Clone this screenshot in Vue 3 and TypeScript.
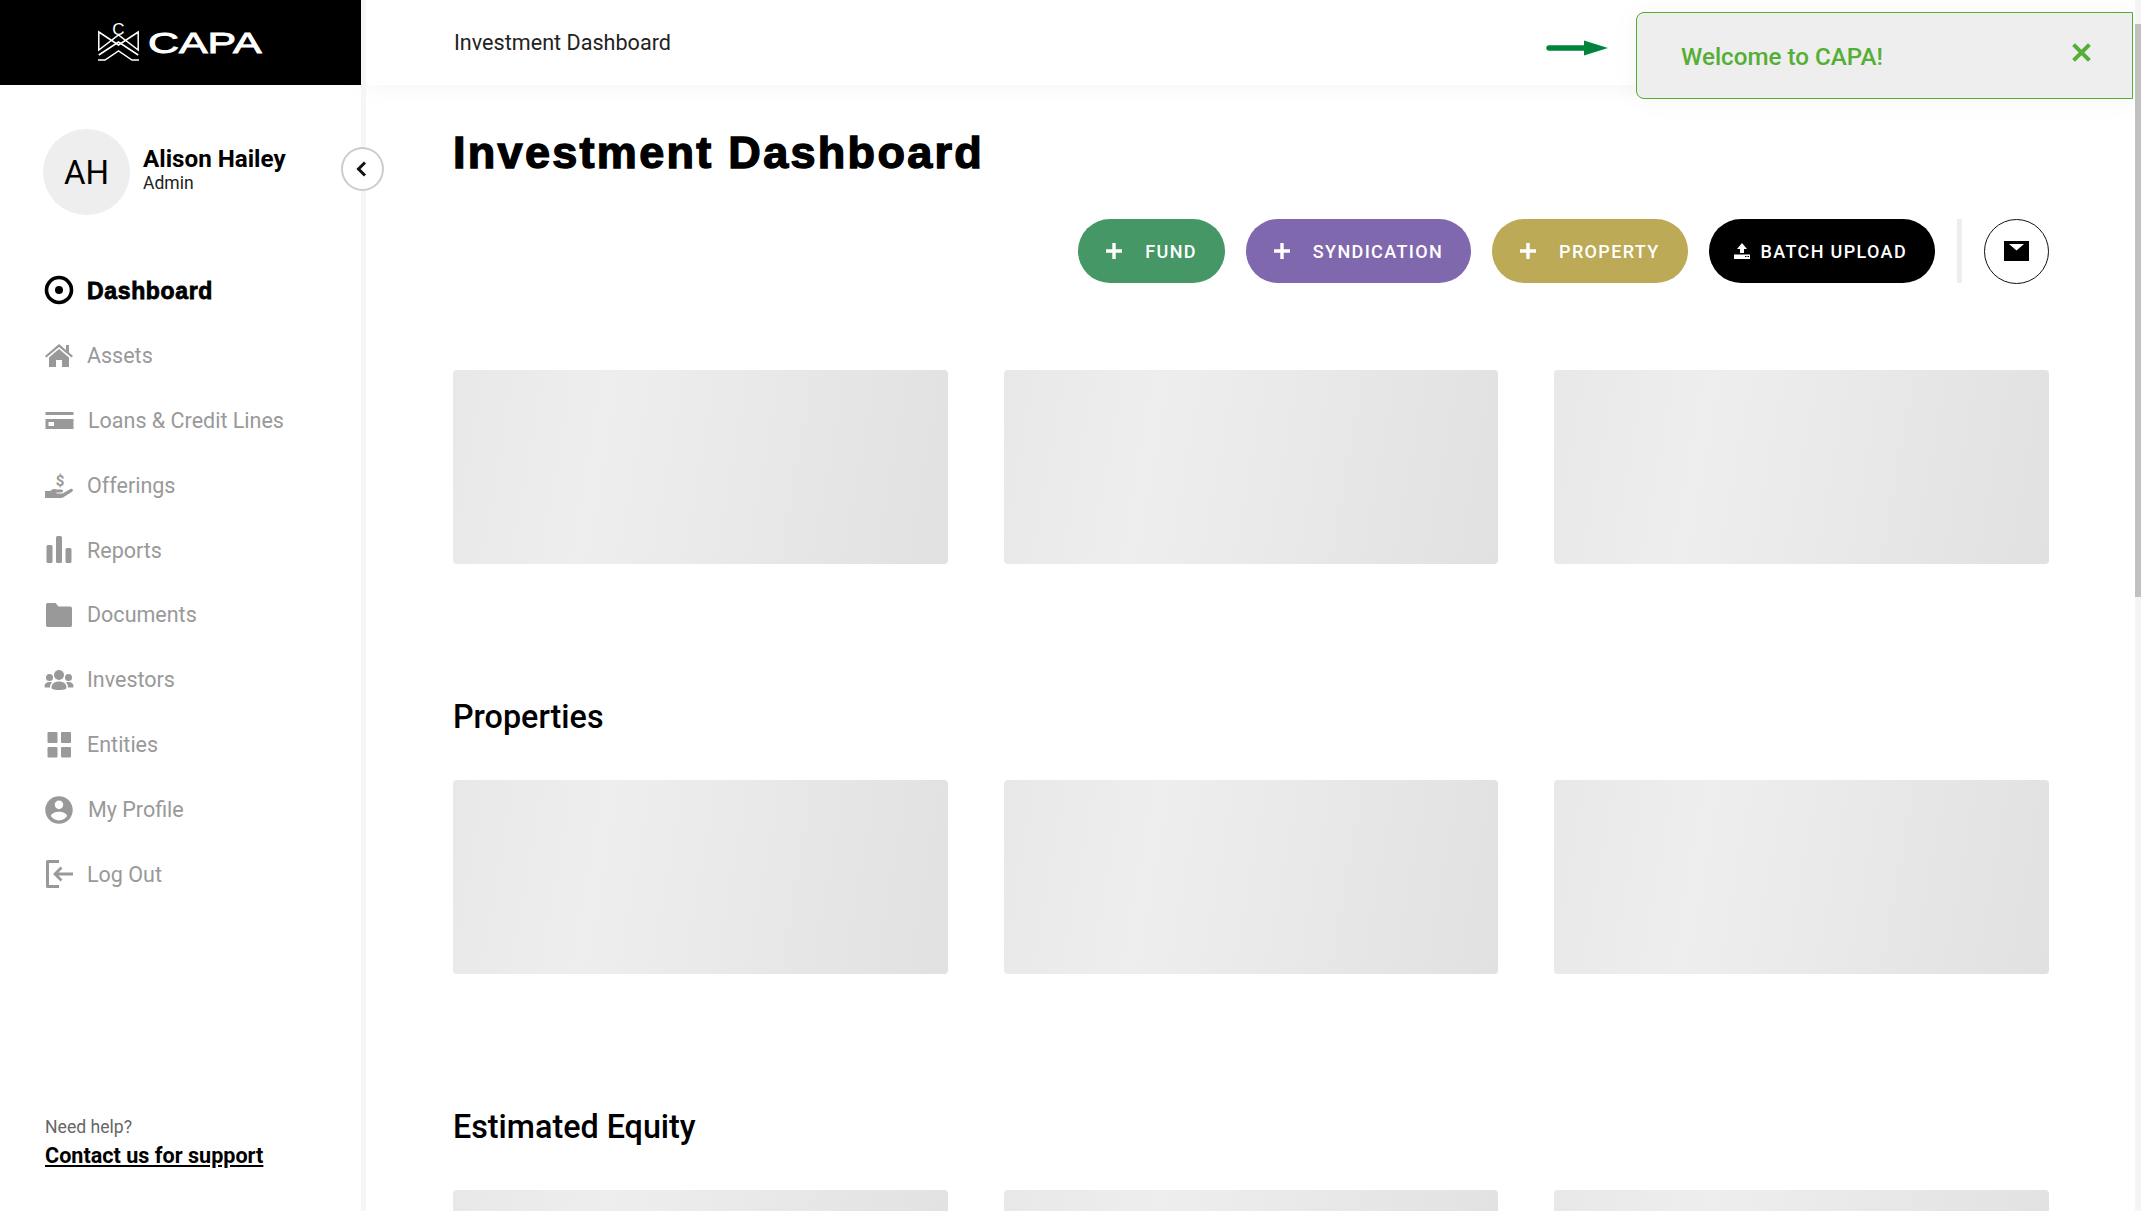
<template>
  <div class="app">
    <aside class="sidebar">
      <div class="brand">
        <svg class="brand-mark" viewBox="0 0 41 38" fill="none" stroke="#fff" stroke-width="1.5">
          <path d="M.8 9 20.5 22 40.2 9V27L20.5 12 .8 27Z" />
          <path d="M.8 32 20.5 19 40.2 32" />
          <path d="M0 37H7L20.5 28 34 37H41" />
          <text x="20.5" y="12" text-anchor="middle" class="brand-c">C</text>
        </svg>
        <span class="brand-name">CAPA</span>
      </div>

      <div class="user">
        <div class="avatar">AH</div>
        <div class="user-text">
          <div class="user-name">Alison Hailey</div>
          <div class="user-role">Admin</div>
        </div>
      </div>
      <button class="collapse" aria-label="Collapse">
        <svg viewBox="0 0 24 24" width="24" height="24" fill="none" stroke="#111" stroke-width="3">
          <path d="M14 5.500 7.500 12l6.500 6.500" />
        </svg>
      </button>

      <nav class="nav">
        <a v-for="item in navItems" :key="item.label" class="nav-item" :class="{ active: item.active }">
          <span class="nav-icon" v-html="item.icon"></span>
          <span :class="{ shifted: item.shifted }">{{ item.label }}</span>
        </a>
      </nav>

      <div class="help">
        <div class="help-q">Need help?</div>
        <a class="help-link">Contact us for support</a>
      </div>
    </aside>

    <div class="main">
      <header class="topbar">Investment Dashboard</header>

      <div class="content">
        <h1>Investment Dashboard</h1>

        <div class="actions">
          <button v-for="b in addButtons" :key="b.label" class="pill" :class="b.cls">
            <svg width="16" height="16" viewBox="0 0 16 16" stroke="#fff" stroke-width="3.4"><path d="M8 0V16M0 8H16" /></svg>
            {{ b.label }}
          </button>
          <button class="pill batch">
            <svg width="16" height="16" viewBox="0 0 16 16" fill="#fff">
              <path d="M8 0 13 6H10V10H6V6H3ZM0 11.5H16V16H0ZM11 13V14H12.5V13ZM13.5 13V14H15V13Z" fill-rule="evenodd" />
            </svg>
            BATCH UPLOAD
          </button>
          <span class="divider"></span>
          <button class="mail" aria-label="Messages">
            <svg width="25" height="20" viewBox="0 0 25 20">
              <path d="M0 0H25V20H0Z" fill="#000" />
              <path d="M5 3H20L12.5 9.500Z" fill="#fff" />
            </svg>
          </button>
        </div>

        <section v-for="(s, i) in sections" :key="i" class="block">
          <h2 v-if="s">{{ s }}</h2>
          <div class="cards">
            <div v-for="n in 3" :key="n" class="card"></div>
          </div>
        </section>
      </div>
    </div>

    <div class="hint-arrow">
      <svg width="62" height="18" viewBox="0 0 62 18" fill="#00843d">
        <path d="M3 6.300H38V1.500L62 9 38 16.500V11.700H3A2.700 2.700 0 0 1 3 6.300Z" />
      </svg>
    </div>
    <div class="toast">
      <span>Welcome to CAPA!</span>
      <svg width="19" height="19" viewBox="0 0 18 18" stroke="#55ae35" stroke-width="3.800">
        <path d="M1.500 1.500 16.500 16.500M16.500 1.500 1.500 16.500" />
      </svg>
    </div>

    <div class="scrollbar"><div class="thumb"></div></div>
  </div>
</template>

<script setup lang="ts">
const svg = (inner: string, box = '0 0 30 30') =>
  `<svg viewBox="${box}" width="30" height="30" fill="#999">${inner}</svg>`

const navItems = [
  {
    label: 'Dashboard',
    active: true,
    icon: svg('<circle cx="15" cy="15" r="12.500" fill="none" stroke="#000" stroke-width="3.600"/><circle cx="15" cy="15" r="4" fill="#000"/>'),
  },
  {
    label: 'Assets',
    icon: svg('<path d="M15 4 22 10V5H25V12.600L29 16 27.600 17.600 15 7 2.400 17.600 1 16ZM15 9 25 17.500V27H18V20H12V27H5V17.500Z"/>'),
  },
  {
    label: 'Loans & Credit Lines',
    shifted: true,
    icon: svg('<path d="M1.500 7H29.500V10H1.500ZM1.500 14H29.500V24H1.500ZM4.500 17V21H10V17Z" fill-rule="evenodd"/>'),
  },
  {
    label: 'Offerings',
    icon: svg('<path d="M1 21H6C9 18.500 11 18.500 13 19.500H17.500C19.500 19.500 19.500 22.500 17.500 22.500H12.500V23.500H18.500L26.500 19C28.500 18 30 20.500 28 21.800L19 27.500C18 28 17 28 16 28H1Z"/><text x="16" y="15.500" text-anchor="middle" font-family="Roboto" font-weight="700" font-size="15">$</text>'),
  },
  {
    label: 'Reports',
    icon: svg('<rect x="2.500" y="10" width="6" height="18" rx="1.500"/><rect x="12" y="1" width="6" height="27" rx="1.500"/><rect x="21.500" y="13" width="6" height="15" rx="1.500"/>'),
  },
  {
    label: 'Documents',
    icon: svg('<path d="M4 3H11.500L14.500 6.500H26C27.500 6.500 28 7.500 28 8.500V25C28 26.500 27 27 26 27H4C3 27 2 26.500 2 25V5C2 3.500 3 3 4 3Z"/>'),
  },
  {
    label: 'Investors',
    icon: svg('<circle cx="15" cy="10" r="5"/><circle cx="5.500" cy="12.500" r="3.500"/><circle cx="24.500" cy="12.500" r="3.500"/><path d="M7.500 22.500C7.500 18.500 11 16.500 15 16.500S22.500 18.500 22.500 22.500C22.500 24 21 25 15 25S7.500 24 7.500 22.500Z"/><path d="M.5 21.500C.5 18.500 2.500 17 5.500 17 6.500 17 7.500 17.300 8 17.500 6.500 19 6 20.500 6 22.500H2C1 22.500.5 22.300.5 21.500ZM29.500 21.500C29.500 18.500 27.500 17 24.500 17 23.500 17 22.500 17.300 22 17.500 23.500 19 24 20.500 24 22.500H28C29 22.500 29.500 22.300 29.500 21.500Z"/>'),
  },
  {
    label: 'Entities',
    icon: svg('<rect x="3.500" y="2" width="10" height="11" rx="1"/><rect x="17" y="2" width="10" height="11" rx="1"/><rect x="3.500" y="17" width="10" height="10.500" rx="1"/><rect x="17" y="17" width="10" height="10.500" rx="1"/>'),
  },
  {
    label: 'My Profile',
    shifted: true,
    icon: svg('<path d="M12 1C5.900 1 1 5.900 1 12s4.900 11 11 11 11-4.900 11-11S18.100 1 12 1zm0 3.300c1.900 0 3.400 1.500 3.400 3.400S13.900 11.100 12 11.100 8.600 9.600 8.600 7.700 10.100 4.300 12 4.300zm0 16c-2.700 0-5.100-1.400-6.500-3.500.03-2.200 4.300-3.400 6.500-3.400 2.200 0 6.500 1.200 6.500 3.400-1.400 2.100-3.800 3.500-6.500 3.500z"/>', '0 0 24 24'),
  },
  {
    label: 'Log Out',
    icon: svg('<path d="M15 2.500H3.500V27.500H15" fill="none" stroke="#999" stroke-width="3" stroke-linejoin="round"/><path d="M29 15H11M17.500 8.500 11 15 17.500 21.500" fill="none" stroke="#999" stroke-width="2.800"/>'),
  },
]

const addButtons = [
  { label: 'FUND', cls: 'fund' },
  { label: 'SYNDICATION', cls: 'syndication' },
  { label: 'PROPERTY', cls: 'property' },
]

const sections = ['', 'Properties', 'Estimated Equity']
</script>

<style>
html, body {
  margin: 0;
  height: 100%;
  overflow: hidden;
  background: #fff;
}
</style>

<style scoped>
.app {
  display: flex;
  position: relative;
  height: 1211px;
  overflow: hidden;
  font-family: Roboto, "Liberation Sans", sans-serif;
  color: #000;
}

.sidebar {
  position: relative;
  display: flex;
  flex-direction: column;
  flex: 0 0 361px;
  border-right: 5px solid #f6f6f6;
}

.brand {
  display: flex;
  align-items: center;
  height: 85px;
  padding-left: 98px;
  box-sizing: border-box;
  background: #000;
}

.brand-mark {
  width: 41px;
  height: 38px;
  margin-top: -2px;
  overflow: visible;
}

.brand-c {
  font: 400 17px "Liberation Sans", sans-serif;
  fill: #fff;
  stroke: none;
}

.brand-name {
  margin-left: 9px;
  font: 400 30px "Liberation Sans", sans-serif;
  color: #fff;
  -webkit-text-stroke: 0.9px #fff;
  transform: scaleX(1.43);
  transform-origin: left center;
}

.user {
  display: flex;
  align-items: center;
  gap: 13px;
  margin: 44px 0 0 43px;
}

.avatar {
  display: flex;
  align-items: center;
  justify-content: center;
  width: 87px;
  height: 86px;
  border-radius: 50%;
  background: #eee;
  font-size: 33px;
}

.user-text {
  margin-top: -5px;
}

.user-name {
  font-size: 24.200px;
  font-weight: 700;
  line-height: 28px;
}

.user-role {
  font-size: 17.500px;
  line-height: 21px;
  color: #222;
}

.collapse {
  position: absolute;
  top: 147px;
  left: 341px;
  display: flex;
  align-items: center;
  justify-content: center;
  width: 43px;
  height: 44px;
  padding: 0;
  border: 2px solid #ccc;
  border-radius: 50%;
  background: #fff;
  z-index: 2;
}

.nav {
  display: flex;
  flex-direction: column;
  margin-top: 43px;
  padding-left: 44px;
}

.nav-item {
  display: flex;
  align-items: center;
  gap: 13px;
  height: 64.900px;
  font-size: 21.500px;
  color: #999;
}

.nav-item.active {
  font-family: "Liberation Sans", sans-serif;
  font-weight: 700;
  font-size: 23px;
  letter-spacing: 0.65px;
  -webkit-text-stroke: 0.8px #000;
  color: #000;
}

.nav-item.active span:last-child {
  padding-top: 3px;
}

.nav-icon {
  display: flex;
  width: 30px;
  height: 30px;
}

.shifted {
  margin-left: 1px;
}

.help {
  margin-top: auto;
  padding: 0 0 42px 45px;
}

.help-q {
  font-size: 17.600px;
  line-height: 24px;
  color: #666;
}

.help-link {
  display: block;
  margin-top: 4px;
  font-size: 21.600px;
  font-weight: 700;
  line-height: 26px;
  text-decoration: underline;
}

.main {
  flex: 1;
  min-width: 0;
}

.topbar {
  display: flex;
  align-items: center;
  height: 85px;
  padding-left: 88px;
  font-size: 21.600px;
  color: #222;
  box-shadow: 0 0 30px rgba(0, 0, 0, 0.05);
}

.content {
  padding: 0 92px 0 87px;
}

h1 {
  margin: 41px 0 0;
  font-family: "Liberation Sans", sans-serif;
  font-size: 45px;
  font-weight: 700;
  line-height: 54px;
  letter-spacing: 2.300px;
  -webkit-text-stroke: 1.400px #000;
}

.actions {
  display: flex;
  align-items: center;
  justify-content: flex-end;
  height: 64px;
  margin-top: 39px;
}

.pill {
  display: flex;
  align-items: center;
  height: 64px;
  padding: 0 28px;
  margin-right: 21px;
  border: 0;
  border-radius: 32px;
  font: 500 18px Roboto, sans-serif;
  letter-spacing: 1.350px;
  color: #fff;
  gap: 23px;
}

.fund { background: #459766; }
.syndication { background: #7f68ad; }
.property { background: #bcaa56; }

.batch {
  margin-right: 0;
  padding-left: 25px;
  gap: 11px;
  background: #000;
}

.divider {
  width: 5px;
  height: 64px;
  margin: 0 22px 0 22px;
  background: #eee;
}

.mail {
  display: flex;
  align-items: center;
  justify-content: center;
  width: 65px;
  height: 65px;
  padding: 0;
  border: 1.500px solid #111;
  border-radius: 50%;
  background: #fff;
}

.block {
  margin-top: 87px;
}

.block + .block {
  margin-top: 135px;
}

.block h2 {
  margin: 0 0 45px;
  font-size: 32.300px;
  font-weight: 500;
  line-height: 36px;
}

.cards {
  display: grid;
  grid-template-columns: repeat(3, 1fr);
  gap: 56px;
}

.card {
  height: 194px;
  border-radius: 4px;
  background: linear-gradient(100deg, #e8e8e8 0%, #eee 30%, #e1e1e1 100%);
}

.hint-arrow {
  position: absolute;
  top: 39px;
  left: 1546px;
}

.toast {
  position: absolute;
  top: 12px;
  left: 1636px;
  width: 497px;
  height: 87px;
  box-sizing: border-box;
  display: flex;
  align-items: center;
  justify-content: space-between;
  padding: 2px 41px 0 44px;
  border: 1px solid #4fae34;
  border-radius: 8px 0 0 8px;
  background: #eee;
  font-size: 24.200px;
  font-weight: 500;
  color: #55ae35;
  box-shadow: 0 0 30px rgba(0, 0, 0, 0.04);
}

.toast svg {
  margin-top: -8px;
}

.scrollbar {
  position: absolute;
  top: 0;
  right: 0;
  bottom: 0;
  width: 6px;
  background: #f5f5f5;
}

.thumb {
  margin-top: 24px;
  height: 573px;
  background: #c1c1c1;
}
</style>
